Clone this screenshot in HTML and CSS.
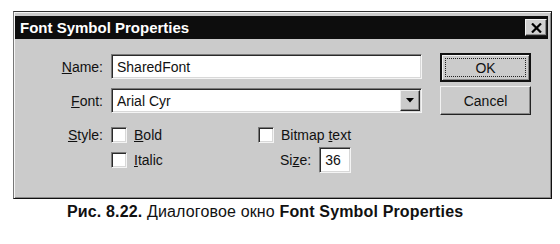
FILE: index.html
```html
<!DOCTYPE html>
<html lang="ru">

<head>
    <meta charset="UTF-8">
    <title>Font Symbol Properties</title>
    <link rel="stylesheet" href="styles.css">
</head>

<body>
    <div class="page">
        <div class="dialog">
            <div class="titlebar">
                <span class="title">Font Symbol Properties</span>
                <span class="close-btn">
                    <svg width="11" height="10" viewBox="0 0 11 10">
                        <path d="M1 0.5 L10 9.5 M10 0.5 L1 9.5" stroke="#000" stroke-width="2.2" fill="none" />
                    </svg>
                </span>
            </div>
            <div class="client">
                <div class="fields">
                    <div class="field-row">
                        <span class="label"><u>N</u>ame:</span>
                        <input type="text" class="textbox" value="SharedFont">
                    </div>
                    <div class="field-row">
                        <span class="label"><u>F</u>ont:</span>
                        <div class="textbox combo">
                            <span class="combo-text">Arial Cyr</span>
                            <span class="combo-btn">
                                <svg width="8" height="5" viewBox="0 0 8 5">
                                    <path d="M0 0 H8 L4 4.5 Z" fill="#000" />
                                </svg>
                            </span>
                        </div>
                    </div>
                    <div class="style-grid">
                        <span class="label"><u>S</u>tyle:</span>
                        <span class="check"><span class="box"></span><span><u>B</u>old</span></span>
                        <span class="check"><span class="box"></span><span>Bitmap <u>t</u>ext</span></span>
                        <span></span>
                        <span class="check"><span class="box"></span><span><u>I</u>talic</span></span>
                        <span class="size">
                            <span>Si<u>z</u>e:</span>
                            <input type="text" class="textbox small" value="36">
                        </span>
                    </div>
                </div>
                <div class="buttons">
                    <button class="btn default"><span class="focus">OK</span></button>
                    <button class="btn">Cancel</button>
                </div>
            </div>
        </div>
        <p class="caption"><b>Рис. 8.22.</b> Диалоговое окно <b>Font Symbol Properties</b></p>
    </div>
</body>

</html>
```

FILE: styles.css
```css
* {
    margin: 0px;
    padding: 0px;
    box-sizing: border-box;
}

body {
    font-family: "Liberation Sans", Arial, sans-serif;
    background: #fff;
    color: #111;
}

.page {
    padding: 11px 0 0 13px;
}

.dialog {
    width: 539px;
    height: 188px;
    background: #cbcbcb;
    border: 1px solid;
    border-color: #333 #111 #111 #777;
    box-shadow: inset 1px 1px 0 #f5f5f5, inset -1px -1px 0 #8a8a8a;
    padding: 4px 3px 3px 1px;
}

.titlebar {
    height: 23px;
    background: #0d0d0d;
    color: #fff;
    display: flex;
    align-items: center;
    justify-content: space-between;
    padding-left: 5px;
}

.titlebar .title {
    font-size: 15px;
    font-weight: bold;
}

.close-btn {
    width: 22px;
    height: 17px;
    margin-right: 1px;
    background: #d0d0d0;
    border: 1px solid;
    border-color: #f2f2f2 #222 #222 #f2f2f2;
    box-shadow: inset -1px -1px 0 #8a8a8a;
    display: flex;
    align-items: center;
    justify-content: center;
}

.client {
    display: flex;
    align-items: flex-start;
    padding-top: 15px;
    font-size: 14px;
}

.fields {
    width: 407px;
}

.field-row {
    display: flex;
    align-items: center;
    gap: 8px;
    margin-bottom: 9px;
}

.label {
    width: 88px;
    text-align: right;
}

.textbox {
    width: 311px;
    height: 25px;
    background: #fff;
    border: 1px solid;
    border-color: #7a7a7a #f4f4f4 #f4f4f4 #7a7a7a;
    box-shadow: inset 1px 1px 0 #2a2a2a, inset -1px -1px 0 #d8d8d8;
    padding: 0 5px;
    font-family: "Liberation Sans", Arial, sans-serif;
    font-size: 14px;
    color: #111;
    outline: none;
}

.combo {
    display: flex;
    align-items: center;
    justify-content: space-between;
    padding: 1px 1px 1px 5px;
}

.combo .combo-btn {
    width: 20px;
    height: 21px;
    background: #cbcbcb;
    border: 1px solid;
    border-color: #eee #222 #222 #eee;
    box-shadow: inset -1px -1px 0 #888;
    display: flex;
    align-items: center;
    justify-content: center;
}

.style-grid {
    display: grid;
    grid-template-columns: 88px 139px auto;
    grid-template-rows: 16px 26px;
    column-gap: 8px;
    row-gap: 4px;
    align-items: center;
    margin-top: 14px;
}

.check {
    display: flex;
    align-items: center;
    gap: 7px;
}

.check .box {
    width: 16px;
    height: 16px;
    background: #fff;
    border: 1px solid;
    border-color: #7a7a7a #f4f4f4 #f4f4f4 #7a7a7a;
    box-shadow: inset 1px 1px 0 #2a2a2a, inset -1px -1px 0 #d8d8d8;
}

.size {
    display: flex;
    align-items: center;
    gap: 8px;
    padding-left: 22px;
}

.textbox.small {
    width: 32px;
    height: 26px;
}

.buttons {
    margin-left: 18px;
    margin-top: -1px;
    display: flex;
    flex-direction: column;
    gap: 4px;
}

.btn {
    width: 91px;
    height: 29px;
    background: #cbcbcb;
    border: 1px solid;
    border-color: #f2f2f2 #222 #222 #f2f2f2;
    box-shadow: inset -1px -1px 0 #888;
    font-family: "Liberation Sans", Arial, sans-serif;
    font-size: 14px;
    color: #111;
    display: flex;
    align-items: center;
    justify-content: center;
}

.btn.default {
    border: 2px solid #111;
    box-shadow: inset 1px 1px 0 #f2f2f2, inset -1px -1px 0 #888;
    padding: 3px;
}

.btn .focus {
    flex: 1;
    align-self: stretch;
    border: 1px dotted #222;
    display: flex;
    align-items: center;
    justify-content: center;
}

.caption {
    margin-top: 4px;
    padding-left: 54px;
    font-size: 16px;
    line-height: 18px;
    letter-spacing: 0.15px;
    color: #111;
}
```
